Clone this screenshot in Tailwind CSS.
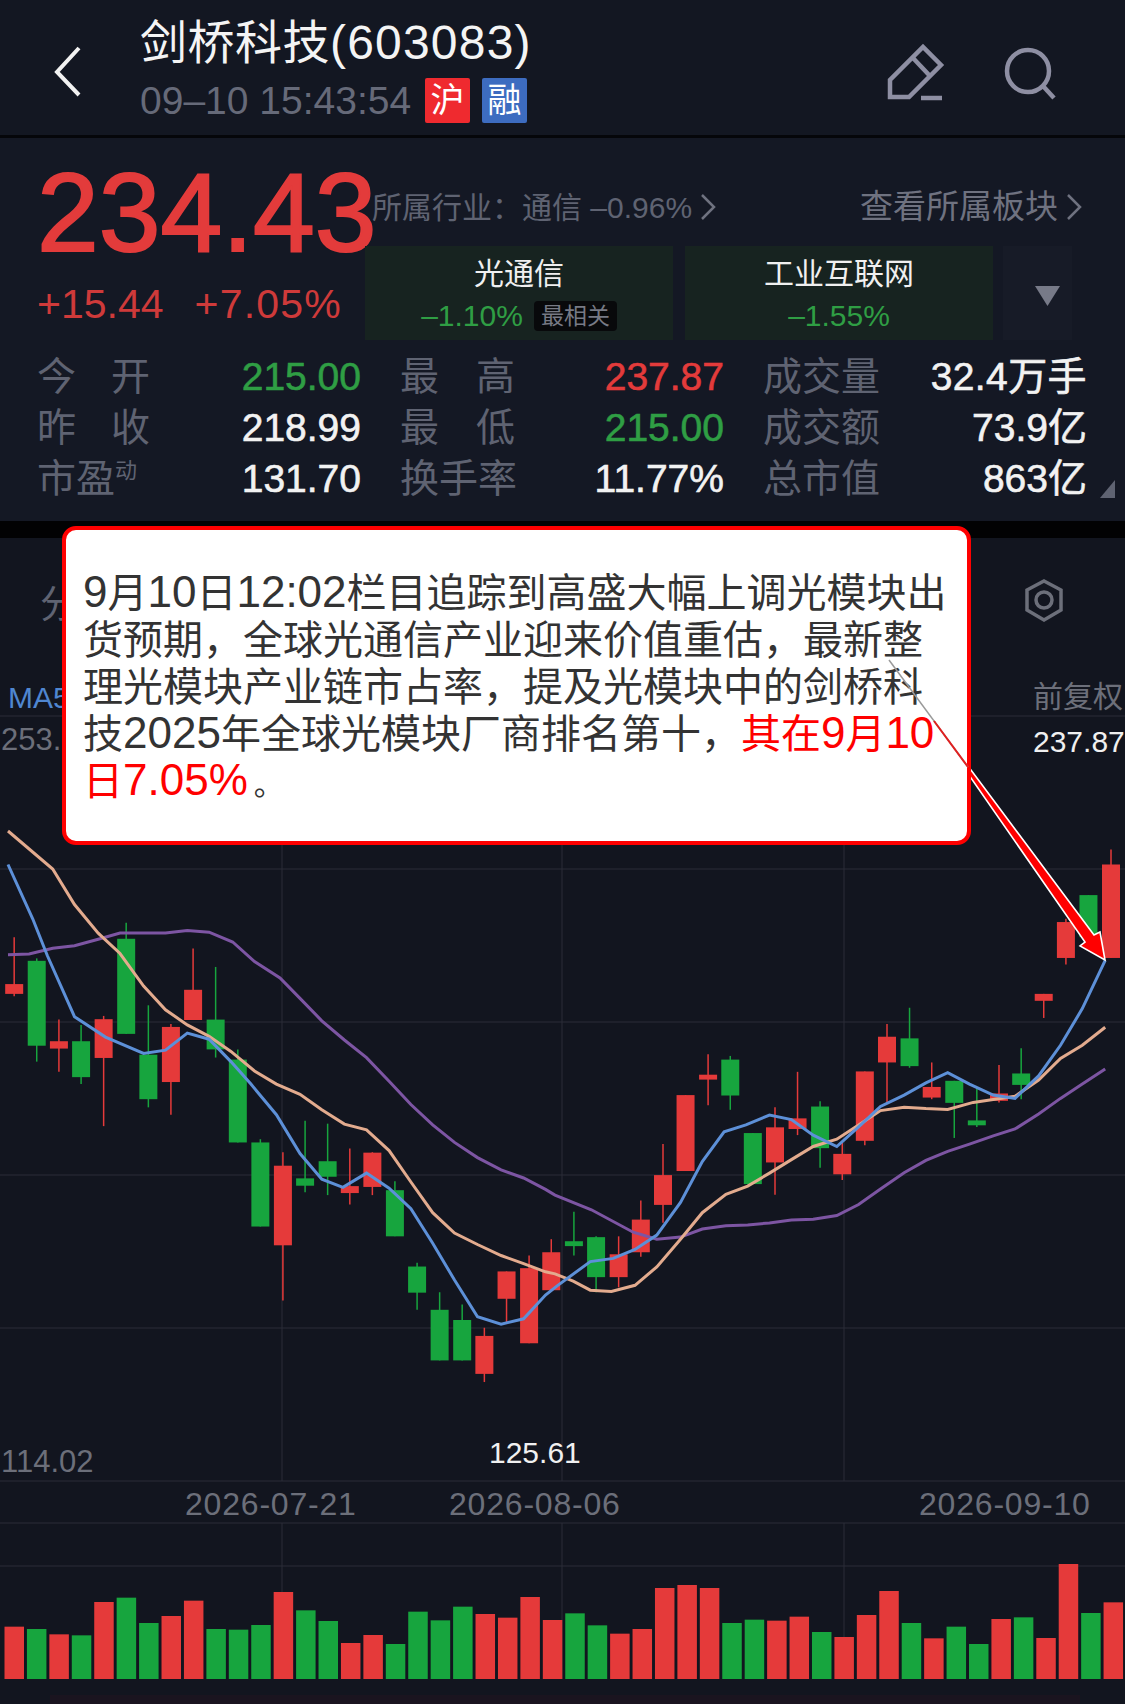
<!DOCTYPE html>
<html lang="zh-CN">
<head>
  <meta charset="UTF-8">
  <title>剑桥科技(603083)</title>
  <script src="https://cdn.jsdelivr.net/npm/@tailwindcss/browser@4"></script>
</head>
<body class="bg-black">
  <div class="relative w-[1125px] h-[1704px] overflow-hidden bg-black font-['Liberation_Sans','Noto_Sans_CJK_SC',sans-serif]">

    <!-- 顶部标题栏 -->
    <header class="h-[135px] bg-[#131722] flex items-start">
      <svg class="w-[140px] h-[135px] shrink-0" viewBox="0 0 140 135" fill="none">
        <polyline points="79,48 57,72 79,95" stroke="#f2f2f2" stroke-width="4" />
      </svg>
      <div class="w-[700px] pt-[17px]">
        <div class="text-[47px] leading-[52px] text-[#f4f4f4] tracking-[0.5px] whitespace-nowrap">剑桥科技<span class="text-[48px] tracking-[1.2px]">(603083)</span></div>
        <div class="mt-[9px] flex items-center">
          <span class="text-[39px] leading-[45px] text-[#666a79] whitespace-nowrap">09–10 15:43:54</span>
          <span class="ml-[14px] w-[45px] h-[45px] flex items-center justify-center rounded-[2px] bg-[#ef2a2f] text-white text-[34px]">沪</span>
          <span class="ml-[12px] w-[45px] h-[45px] flex items-center justify-center rounded-[2px] bg-[#3d6cc0] text-white text-[34px]">融</span>
        </div>
      </div>
      <svg class="w-[285px] h-[135px] shrink-0" viewBox="840 0 285 135" fill="none" stroke="#8e8fa3" stroke-width="4.5">
        <path d="M890 97 V80 L923 47 L941 65 L909 97 Z" />
        <path d="M913 58 L930 76" />
        <path d="M921 98 H942" />
        <circle cx="1028" cy="71" r="21" />
        <path d="M1043 86 L1054 98" />
      </svg>
    </header>
    <div class="h-[3px] bg-[#05060a]"></div>

    <!-- 行情信息 -->
    <section class="h-[383px] bg-[#141824]">
      <div class="flex h-[212px]">
        <div class="w-[365px] shrink-0 pl-[37px] pt-[25px]">
          <div class="text-[111px] leading-[100px] text-[#e33b3b] [-webkit-text-stroke:2px_#e33b3b] whitespace-nowrap">234.43</div>
          <div class="mt-[19px] flex gap-[31px] text-[41px] leading-[44px] text-[#cf3a3a] whitespace-nowrap">
            <span>+15.44</span>
            <span class="tracking-[1.2px]">+7.05%</span>
          </div>
        </div>
        <div class="w-[717px] pt-[49px]">
          <div class="h-[40px] pl-[7px] flex items-center justify-between whitespace-nowrap">
            <div class="flex items-center text-[30px] text-[#5f6372]">
              <span>所属行业：通信 –0.96%</span>
              <svg class="ml-[8px] w-[16px] h-[26px]" viewBox="0 0 16 26" fill="none" stroke="#6f7280" stroke-width="2.5"><polyline points="2,1 14,13 2,25" /></svg>
            </div>
            <div class="flex items-center text-[33px] text-[#6f7280]">
              <span>查看所属板块</span>
              <svg class="ml-[8px] w-[16px] h-[26px]" viewBox="0 0 16 26" fill="none" stroke="#6f7280" stroke-width="2.5"><polyline points="2,1 14,13 2,25" /></svg>
            </div>
          </div>
          <div class="mt-[19px] flex">
            <div class="w-[308px] h-[94px] bg-[#172320] flex flex-col items-center pt-[8px]">
              <div class="text-[30px] leading-[40px] text-[#f0f0f0]">光通信</div>
              <div class="mt-[3px] flex items-center gap-[11px]">
                <span class="text-[30px] leading-[38px] text-[#2f9e44]">–1.10%</span>
                <span class="h-[30px] px-[7px] rounded-[4px] bg-[#08090b] text-[23px] leading-[30px] text-[#777a85]">最相关</span>
              </div>
            </div>
            <div class="ml-[12px] w-[308px] h-[94px] bg-[#172320] flex flex-col items-center pt-[8px]">
              <div class="text-[30px] leading-[40px] text-[#f0f0f0]">工业互联网</div>
              <div class="mt-[3px] text-[30px] leading-[38px] text-[#2f9e44]">–1.55%</div>
            </div>
            <div class="ml-[10px] w-[69px] h-[94px] bg-[#171b27] flex items-center pl-[32px] pt-[6px]">
              <svg class="w-[25px] h-[20px]" viewBox="0 0 25 20"><polygon points="0,0 25,0 12.5,20" fill="#777a88" /></svg>
            </div>
          </div>
        </div>
      </div>

      <div class="relative pl-[37px] pt-[1px] w-[1087px] grid grid-cols-3 gap-x-[39px] text-[39px] leading-[51px] whitespace-nowrap">
        <div class="flex justify-between">
          <span class="w-[113px] flex justify-between text-[#5f6372]"><span>今</span><span>开</span></span>
          <span class="text-[#2f9e44] [-webkit-text-stroke:0.6px_#2f9e44]">215.00</span>
        </div>
        <div class="flex justify-between">
          <span class="w-[115px] flex justify-between text-[#5f6372]"><span>最</span><span>高</span></span>
          <span class="text-[#e33b3b] [-webkit-text-stroke:0.6px_#e33b3b]">237.87</span>
        </div>
        <div class="flex justify-between">
          <span class="text-[#5f6372]">成交量</span>
          <span class="text-[#f2f2f2] [-webkit-text-stroke:0.6px_#f2f2f2] tracking-[0.4px]">32.4万手</span>
        </div>
        <div class="flex justify-between">
          <span class="w-[113px] flex justify-between text-[#5f6372]"><span>昨</span><span>收</span></span>
          <span class="text-[#f2f2f2] [-webkit-text-stroke:0.6px_#f2f2f2]">218.99</span>
        </div>
        <div class="flex justify-between">
          <span class="w-[115px] flex justify-between text-[#5f6372]"><span>最</span><span>低</span></span>
          <span class="text-[#2f9e44] [-webkit-text-stroke:0.6px_#2f9e44]">215.00</span>
        </div>
        <div class="flex justify-between">
          <span class="text-[#5f6372]">成交额</span>
          <span class="text-[#f2f2f2] [-webkit-text-stroke:0.6px_#f2f2f2]">73.9亿</span>
        </div>
        <div class="flex justify-between">
          <span class="text-[#5f6372]">市盈<sup class="text-[22px] -top-[14px]">动</sup></span>
          <span class="text-[#f2f2f2] [-webkit-text-stroke:0.6px_#f2f2f2]">131.70</span>
        </div>
        <div class="flex justify-between">
          <span class="text-[#5f6372]">换手率</span>
          <span class="text-[#f2f2f2] [-webkit-text-stroke:0.6px_#f2f2f2]">11.77%</span>
        </div>
        <div class="flex justify-between">
          <span class="text-[#5f6372]">总市值</span>
          <span class="text-[#f2f2f2] [-webkit-text-stroke:0.6px_#f2f2f2]">863亿</span>
        </div>
        <svg class="absolute left-[1100px] top-[130px] w-[15px] h-[18px]" viewBox="0 0 15 18"><polygon points="15,0 15,18 0,18" fill="#5f6372" /></svg>
      </div>
    </section>
    <div class="h-[17px] bg-[#020203]"></div>

    <!-- K线图 -->
    <section class="h-[1166px] bg-[#12151f]">
      <svg id="chart" class="block w-[1125px] h-[1166px]" viewBox="0 538 1125 1166"></svg>
    </section>

    <!-- 箭头和说明框 -->
    <svg class="absolute left-0 top-0 w-[1125px] h-[1704px] pointer-events-none z-10" viewBox="0 0 1125 1704">
      <polygon points="889,660 1094,935 1100,932 1105,960 1080,946 1085,942" fill="#ff0000" stroke="#ffffff" stroke-width="1.6" />
    </svg>
    <div class="absolute z-20 left-[62px] top-[526px] w-[909px] h-[319px] rounded-[14px] border-[4px] border-[#ff0000] bg-white pl-[17px] pt-[40px] text-[40px] leading-[47px] text-[#333333] whitespace-nowrap">
      <span class="text-[44px] leading-none">9</span>月<span class="text-[44px] leading-none">10</span>日<span class="text-[44px] leading-none">12:02</span>栏目追踪到高盛大幅上调光模块出<br>
      货预期，全球光通信产业迎来价值重估，最新整<br>
      理光模块产业链市占率，提及光模块中的剑桥科<br>
      技<span class="text-[44px] leading-none">2025</span>年全球光模块厂商排名第十，<span class="text-[#ff0000]">其在<span class="text-[44px] leading-none">9</span>月<span class="text-[44px] leading-none">10</span><br>日<span class="text-[44px] leading-none">7.05%</span></span><span class="ml-[6px] text-[30px] leading-none">。</span>
    </div>
    <svg class="absolute z-30 left-0 top-0 w-[1125px] h-[1704px] pointer-events-none" viewBox="0 0 1125 1704">
      <path d="M889 660 L968 767" stroke="#9a9a9a" stroke-width="1.5" fill="none" />
      <path d="M934 721 L968 767" stroke="#e02020" stroke-width="2" fill="none" />
    </svg>
  </div>

  <script>
    const RED = "#e53a3a";
    const GREEN = "#17a53e";
    const NS = "http://www.w3.org/2000/svg";
    const chart = document.getElementById("chart");

    function add(tag, attrs, text) {
      const el = document.createElementNS(NS, tag);
      Object.keys(attrs).forEach(k => el.setAttribute(k, attrs[k]));
      if (text) el.textContent = text;
      chart.appendChild(el);
    }

    // 网格线
    [716, 869, 1022, 1175, 1328, 1481, 1523, 1566].forEach(y => add("line", { x1: 0, x2: 1125, y1: y, y2: y, stroke: "#2a2d38" }));
    [282, 562, 844].forEach(x => {
      add("line", { x1: x, x2: x, y1: 840, y2: 1481, stroke: "#2a2d38" });
      add("line", { x1: x, x2: x, y1: 1523, y2: 1679, stroke: "#2a2d38" });
    });

    // 蜡烛图: [x, 影线上, 影线下, 实体上, 实体下, 颜色] (缩放图坐标)
    const leftX = 0, rightX = 555, sx = 1 / 2.75, sy = 1 / 2.45;
    const candlesA = [
      [39,385,530,500,524,"r"],[101,437,690,443,651,"g"],[162,587,715,640,658,"r"],[223,600,745,640,728,"g"],
      [285,578,848,586,681,"r"],[347,350,622,389,622,"g"],[408,552,802,673,782,"g"],[470,598,820,605,740,"r"],
      [531,413,588,514,588,"r"],[593,458,680,587,660,"g"],[654,660,888,685,888,"g"],[716,880,1094,888,1094,"g"],
      [778,912,1275,945,1140,"r"],[839,835,1010,976,994,"g"],[901,842,1017,934,972,"g"],[962,903,1040,995,1012,"r"],
      [1024,912,1017,913,997,"r"],[1086,983,1118,1005,1118,"g"],[1147,1183,1298,1192,1256,"g"],[1209,1255,1422,1298,1422,"g"],
      [1271,1285,1422,1323,1422,"g"],[1332,1342,1475,1362,1455,"r"],[1393,1204,1330,1204,1271,"r"],[1455,1165,1380,1196,1380,"r"],
      [1516,1125,1250,1157,1250,"r"]
    ];
    const candlesB = [
      [52,1058,1165,1130,1142,"g"],[113,1118,1255,1120,1218,"g"],[175,1118,1243,1162,1218,"r"],[236,1030,1168,1077,1157,"r"],
      [297,892,1085,968,1041,"r"],[359,772,958,772,958,"r"],[421,672,797,722,734,"r"],[482,676,808,685,773,"g"],
      [544,865,990,865,990,"g"],[605,802,1016,851,937,"r"],[667,715,870,829,855,"r"],[729,787,950,800,902,"g"],
      [790,885,980,916,966,"r"],[852,714,895,714,884,"r"],[913,598,790,629,692,"r"],[975,558,705,633,701,"g"],
      [1036,692,782,752,778,"r"],[1098,737,877,737,791,"g"],[1160,755,850,834,846,"g"],[1221,698,790,768,786,"r"],
      [1282,657,782,719,747,"g"],[1344,524,583,524,541,"r"],[1405,340,452,348,436,"r"],[1467,282,385,282,385,"g"],
      [1529,170,436,207,436,"r"]
    ];
    function drawCandles(list, ox) {
      list.forEach(c => {
        const x = ox + c[0] * sx, color = c[5] === "r" ? RED : GREEN;
        add("line", { x1: x, x2: x, y1: 780 + c[1] * sy, y2: 780 + c[2] * sy, stroke: color, "stroke-width": 1.5 });
        add("rect", { x: x - 9, y: 780 + c[3] * sy, width: 18, height: (c[4] - c[3]) * sy, fill: color });
      });
    }
    drawCandles(candlesA, leftX);
    drawCandles(candlesB, rightX);

    // 均线
    function toPoints(a, b) {
      const pts = [];
      for (let i = 0; i < a.length; i += 2) pts.push((a[i] * sx).toFixed(1) + "," + (780 + a[i + 1] * sy).toFixed(1));
      for (let i = 0; i < b.length; i += 2) pts.push((555 + b[i] * sx).toFixed(1) + "," + (780 + b[i + 1] * sy).toFixed(1));
      return pts.join(" ");
    }
    const ma5 = toPoints(
      [22,207,90,340,130,430,205,580,290,630,395,670,455,662,515,620,575,635,635,690,690,745,760,820,825,915,885,978,943,998,1008,963,1070,1000,1130,1050,1190,1135,1250,1225,1313,1315,1378,1333,1440,1320,1500,1262],
      [5,1240,97,1180,160,1172,220,1150,280,1115,345,1035,405,935,465,862,525,845,590,821,650,832,710,870,775,898,835,850,895,800,960,772,1020,742,1080,717,1140,745,1205,772,1265,780,1330,725,1390,650,1450,560,1513,442]
    );
    const ma10 = toPoints(
      [22,125,145,218,205,305,270,375,330,425,395,505,455,563,515,600,575,628,635,665,700,713,760,745,825,770,885,808,947,843,1008,857,1070,908,1130,985,1190,1060,1250,1110,1313,1138,1378,1165,1440,1185,1500,1205],
      [0,1210,50,1228,97,1250,155,1253,220,1238,280,1193,345,1125,405,1060,470,1015,530,995,590,963,650,930,710,898,775,880,835,845,895,810,960,802,1020,805,1080,807,1150,790,1205,783,1265,775,1330,735,1390,682,1450,650,1513,606]
    );
    const ma20 = toPoints(
      [22,428,80,426,145,412,205,406,270,390,330,375,395,375,455,375,515,369,575,373,640,397,700,445,770,485,825,535,885,590,947,637,1008,680,1070,738,1130,795,1190,845,1250,888,1313,925,1378,955,1440,975,1500,1003],
      [0,1017,100,1053,215,1108,280,1125,345,1120,405,1100,470,1092,530,1090,590,1085,650,1078,710,1076,775,1067,835,1040,895,1002,960,962,1020,932,1080,910,1140,892,1205,872,1265,855,1330,818,1390,780,1450,745,1513,708]
    );
    add("polyline", { points: ma20, fill: "none", stroke: "#7d55a3", "stroke-width": 3 });
    add("polyline", { points: ma10, fill: "none", stroke: "#e3ab8e", "stroke-width": 3 });
    add("polyline", { points: ma5, fill: "none", stroke: "#5d90d8", "stroke-width": 3 });

    // 成交量
    const volumes = [
      ["r",620],["g",627],["r",643],["g",646],["r",546],["g",533],["g",609],["r",588],["r",542],["g",627],
      ["g",629],["g",615],["r",516],["g",571],["g",603],["r",669],["r",645],["g",672],["g",575],["g",601],
      ["g",560],["r",582],["r",593],["r",531],["r",600],["g",580],["g",616],["r",641],["r",627],["r",504],
      ["r",495],["r",504],["g",609],["g",599],["r",602],["r",590],["g",636],["r",651],["r",585],["r",513],
      ["g",609],["r",655],["g",620],["g",672],["r",597],["g",592],["r",654],["r",432],["g",579],["r",547]
    ];
    volumes.forEach((v, i) => {
      const top = 1420 + v[1] / 3;
      add("rect", { x: 4.5 + i * 22.43, y: top, width: 19.5, height: 1679 - top, fill: v[0] === "r" ? RED : GREEN });
    });
    add("rect", { x: 50, y: 1695, width: 1030, height: 9, fill: "#1a141f" });

    // 坐标文字
    const labels = [
      [40, 617, "分", "#5f6372", 38, 0], [8, 708, "MA5", "#4f86d0", 30, 0], [1033, 707, "前复权", "#6c6f7a", 30, 0],
      [1, 750, "253.", "#6c6f7a", 31, 0], [1033, 752, "237.87", "#f0f0f0", 30, 0], [1, 1472, "114.02", "#6c6f7a", 31, 0],
      [489, 1463, "125.61", "#f0f0f0", 30, 0], [185, 1515, "2026-07-21", "#6c6f7a", 32, 0.8], [449, 1515, "2026-08-06", "#6c6f7a", 32, 0.8],
      [919, 1515, "2026-09-10", "#6c6f7a", 32, 0.8]
    ];
    labels.forEach(l => add("text", { x: l[0], y: l[1], fill: l[3], "font-size": l[4], "letter-spacing": l[5] }, l[2]));

    // 设置图标
    add("polygon", { points: "1044,581 1061,590 1061,610 1044,620 1027,610 1027,590", fill: "none", stroke: "#6c6f7a", "stroke-width": 3.5 });
    add("circle", { cx: 1044, cy: 600, r: 8, fill: "none", stroke: "#6c6f7a", "stroke-width": 3.5 });
  </script>
</body>
</html>
